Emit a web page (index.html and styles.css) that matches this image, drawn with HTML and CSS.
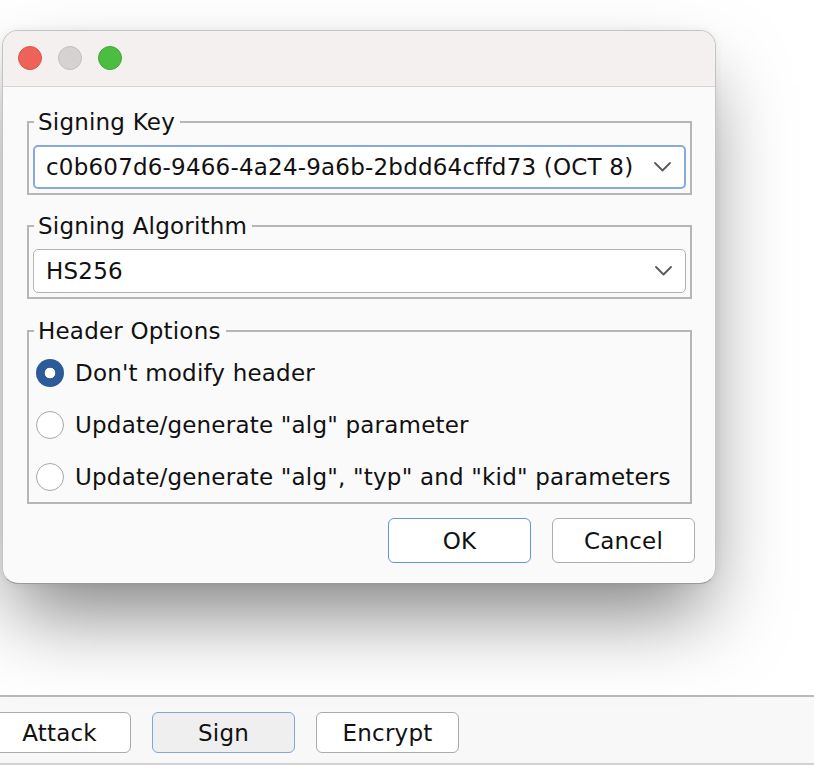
FILE: index.html
```html
<!DOCTYPE html>
<html>
<head>
<meta charset="utf-8">
<link rel="stylesheet" href="styles.css">
</head>
<body>
<div class="page">
  <div class="blank"></div>
  <div class="toolbar">
    <button class="tbtn">Attack</button>
    <button class="tbtn active">Sign</button>
    <button class="tbtn">Encrypt</button>
  </div>
  <div class="footer"></div>
</div>

<div class="dialog">
  <div class="titlebar">
    <span class="light red"></span>
    <span class="light gray"></span>
    <span class="light green"></span>
  </div>
  <div class="body">
    <fieldset class="group">
      <legend>Signing Key</legend>
      <div class="select focused">
        <span>c0b607d6-9466-4a24-9a6b-2bdd64cffd73 (OCT 8)</span>
        <svg class="chev" width="17" height="10" viewBox="0 0 17 10"><polyline points="1,1 8.5,8.5 16,1" fill="none" stroke="#5a5a5a" stroke-width="1.8" stroke-linecap="round" stroke-linejoin="round"/></svg>
      </div>
    </fieldset>
    <fieldset class="group g2">
      <legend>Signing Algorithm</legend>
      <div class="select">
        <span>HS256</span>
        <svg class="chev" width="17" height="10" viewBox="0 0 17 10"><polyline points="1,1 8.5,8.5 16,1" fill="none" stroke="#5a5a5a" stroke-width="1.8" stroke-linecap="round" stroke-linejoin="round"/></svg>
      </div>
    </fieldset>
    <fieldset class="group g3">
      <legend>Header Options</legend>
      <div class="radios">
        <div class="row"><span class="radio on"></span><span>Don't modify header</span></div>
        <div class="row"><span class="radio"></span><span>Update/generate "alg" parameter</span></div>
        <div class="row"><span class="radio"></span><span>Update/generate "alg", "typ" and "kid" parameters</span></div>
      </div>
    </fieldset>
    <div class="actions">
      <button class="dbtn primary">OK</button>
      <button class="dbtn">Cancel</button>
    </div>
  </div>
</div>
</body>
</html>
```

FILE: styles.css
```css
* { box-sizing: border-box; }
html, body { margin: 0; padding: 0; }
body {
  width: 814px;
  height: 778px;
  overflow: hidden;
  background: #ffffff;
  font-family: "DejaVu Sans", "Liberation Sans", sans-serif;
  font-size: 23px;
  letter-spacing: 0.2px;
  color: #111;
  position: relative;
}

.page { display: flex; flex-direction: column; }
.blank { height: 695px; background: #ffffff; }
.toolbar {
  display: flex;
  gap: 21px;
  padding: 15px 0 10px 0;
  margin-left: -12px;
  background: #f8f8f8;
  border-top: 2px solid #b9b9b9;
  border-bottom: 2px solid #d2d2d2;
}
.tbtn {
  width: 143px;
  height: 41px;
  font-family: inherit;
  font-size: 23px;
  letter-spacing: 0.2px;
  color: #111;
  background: #ffffff;
  border: 1.5px solid #ababab;
  border-radius: 6px;
  padding: 0;
}
.tbtn.active {
  background: #efefef;
  border-color: #80a6da;
}
.footer { flex: 1; height: 20px; background: #f8f8f8; }

.dialog {
  position: absolute;
  left: 2px;
  top: 30px;
  width: 714px;
  border: 1px solid #c4c4c4;
  border-bottom-color: #9a9a9a;
  border-radius: 16px;
  background: #fafafa;
  overflow: hidden;
  box-shadow: 0 40px 80px -12px rgba(0,0,0,0.5), 0 0 8px rgba(0,0,0,0.06);
}
.titlebar {
  height: 56px;
  background: #f3f0ef;
  border-bottom: 1px solid #d7d4d3;
  display: flex;
  align-items: center;
  gap: 16px;
  padding: 0 0 2px 15px;
}
.light {
  width: 24px;
  height: 24px;
  border-radius: 50%;
  display: block;
}
.red { background: #ef6257; border: 1px solid #d8564c; }
.gray { background: #d6d2d1; border: 1px solid #c2bebd; }
.green { background: #4bbd41; border: 1px solid #41a737; }

.body {
  padding: 20px 23px 20px 24px;
  display: flex;
  flex-direction: column;
}
.group {
  margin: 0;
  min-width: 0;
  border: 2px solid #b6b6b6;
  padding: 8px 4px 4px 4px;
}
.group legend {
  padding: 0 5px 0 4px;
  margin-left: 1px;
  line-height: 30px;
  font-size: 23px;
  color: #111;
}
.g2 { margin-top: 16px; }
.g3 { margin-top: 17px; padding: 2px 4px 0 4px; }

.select {
  height: 44px;
  background: #ffffff;
  border: 1.5px solid #b3b3b3;
  border-radius: 5px;
  display: flex;
  align-items: center;
  justify-content: space-between;
  padding: 0 13px 0 12px;
}
.select.focused {
  border: 2px solid #87aadd;
  padding-left: 11px;
}
.chev { display: block; }

.radios { display: flex; flex-direction: column; gap: 2px; }
.row {
  height: 50px;
  display: flex;
  align-items: center;
  gap: 11px;
  padding-left: 3px;
}
.radio {
  width: 28px;
  height: 28px;
  border-radius: 50%;
  background: #ffffff;
  border: 1.5px solid #a8a8a8;
  display: block;
  flex: none;
}
.radio.on {
  border: none;
  background: radial-gradient(circle, #ffffff 0 5px, #2c5b99 5.6px);
}

.actions {
  display: flex;
  justify-content: flex-end;
  gap: 21px;
  margin-top: 14px;
  margin-right: -3px;
}
.dbtn {
  width: 143px;
  height: 45px;
  font-family: inherit;
  font-size: 23px;
  letter-spacing: 0.2px;
  color: #111;
  background: #ffffff;
  border: 1.5px solid #adadad;
  border-radius: 6px;
  padding: 0;
}
.dbtn.primary { border-color: #5f96dd; }
```
